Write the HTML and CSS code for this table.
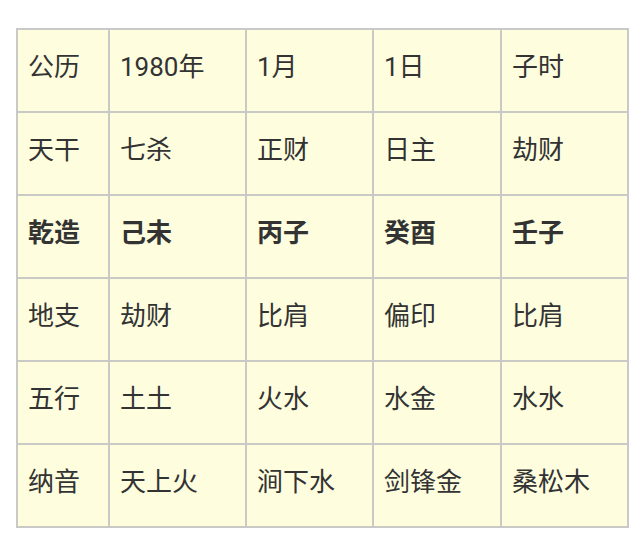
FILE: index.html
```html
<!DOCTYPE html>
<html lang="zh">
<head>
<meta charset="utf-8">
<link rel="stylesheet" href="styles.css">
</head>
<body>
<div class="grid">
  <div class="cell">公历</div><div class="cell">1980年</div><div class="cell">1月</div><div class="cell">1日</div><div class="cell">子时</div>
  <div class="cell">天干</div><div class="cell">七杀</div><div class="cell">正财</div><div class="cell">日主</div><div class="cell">劫财</div>
  <div class="cell bold">乾造</div><div class="cell bold">己未</div><div class="cell bold">丙子</div><div class="cell bold">癸酉</div><div class="cell bold">壬子</div>
  <div class="cell">地支</div><div class="cell">劫财</div><div class="cell">比肩</div><div class="cell">偏印</div><div class="cell">比肩</div>
  <div class="cell">五行</div><div class="cell">土土</div><div class="cell">火水</div><div class="cell">水金</div><div class="cell">水水</div>
  <div class="cell">纳音</div><div class="cell">天上火</div><div class="cell">涧下水</div><div class="cell">剑锋金</div><div class="cell">桑松木</div>
</div>
</body>
</html>
```
FILE: styles.css
```css
html, body {
  margin: 0;
  padding: 0;
  background: #ffffff;
}
body {
  padding: 28px 0 0 16px;
  font-family: Roboto, "Noto Sans CJK SC", sans-serif;
}
.grid {
  display: grid;
  grid-template-columns: 90px 135px 125px 126px 125px;
  grid-template-rows: repeat(6, 81px);
  gap: 2px;
  padding: 2px;
  background: #c9c9c6;
  width: max-content;
}
.cell {
  background: #fefedf;
  color: #333333;
  font-size: 26px;
  display: flex;
  align-items: center;
  padding: 0 0 8px 10px;
  line-height: 1;
}
.bold {
  font-weight: 700;
}
```
